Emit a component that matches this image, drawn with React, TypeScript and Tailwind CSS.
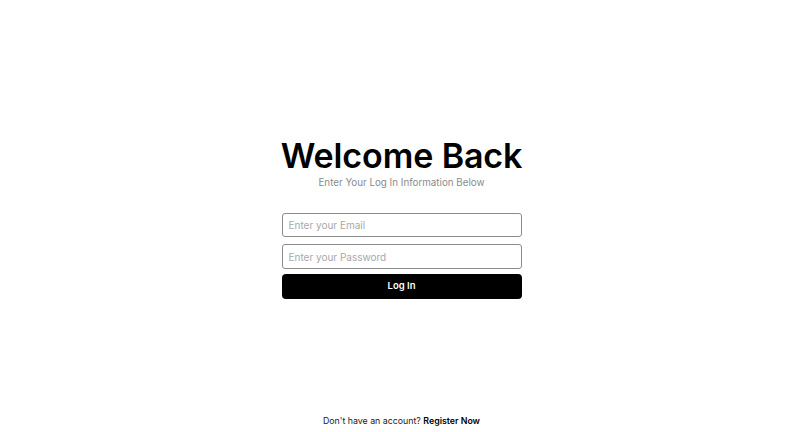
export default function App() {
  return (
    <div className="h-[432px] w-full bg-white flex flex-col font-['Inter',sans-serif] text-black">
      {/* Login form */}
      <div className="flex-1 flex items-center justify-center pt-[21px] pr-[3px]">
        <div className="w-[240px] flex flex-col items-center">
          <h1 className="whitespace-nowrap text-[34px] leading-[40px] font-semibold tracking-[-0.1px]">Welcome Back</h1>
          <p className="whitespace-nowrap text-[9.8px] leading-[14px] text-[#8a8a8a]">Enter Your Log In Information Below</p>

          <form className="w-full flex flex-col gap-[7px] mt-[23px]" onSubmit={(e) => e.preventDefault()}>
            <input
              type="email"
              placeholder="Enter your Email"
              className="w-full h-[24px] px-[6px] text-[10px] border border-[#8c8c8c] rounded-[3px] outline-none placeholder:text-[#a8a8a8]"
            />
            <input
              type="password"
              placeholder="Enter your Password"
              className="w-full h-[25px] px-[6px] text-[10px] border border-[#8c8c8c] rounded-[3px] outline-none placeholder:text-[#a8a8a8]"
            />
            <button
              type="submit"
              className="w-full h-[25px] -mt-[2px] bg-black text-white text-[9.5px] font-semibold rounded-[4px]"
            >
              Log In
            </button>
          </form>
        </div>
      </div>

      {/* Footer */}
      <div className="pb-[4px] pr-[3px] text-center text-[8.8px] leading-[14px] text-[#222]">
        Don't have an account? <span className="font-semibold text-black">Register Now</span>
      </div>
    </div>
  );
}
